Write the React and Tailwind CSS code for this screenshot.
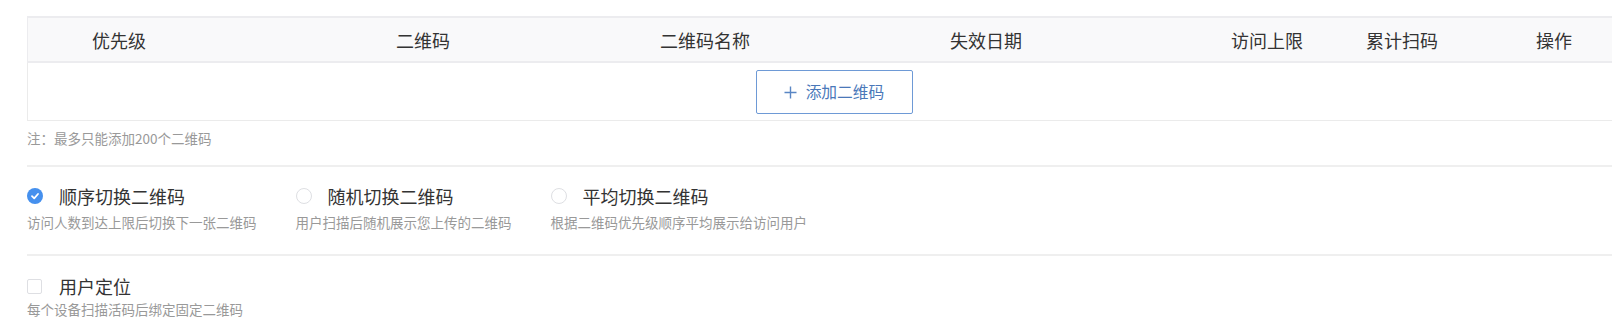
import React from "react";

const font = { fontFamily: '"Noto Sans CJK SC", "Noto Sans", sans-serif' };

function Radio({ checked }) {
  if (checked) {
    return (
      <span className="flex h-[16px] w-[16px] shrink-0 items-center justify-center rounded-full bg-[#4590ee]">
        <svg width="10" height="10" viewBox="0 0 10 10">
          <path d="M2 5.2 L4.2 7.3 L8 3" fill="none" stroke="#fff" strokeWidth="1.8" strokeLinecap="round" strokeLinejoin="round" />
        </svg>
      </span>
    );
  }
  return <span className="h-[16px] w-[16px] shrink-0 rounded-full border border-[#dedfe3] bg-white" />;
}

function Option({ checked, label, desc }) {
  return (
    <div>
      <div className="flex h-[24px] items-center">
        <Radio checked={checked} />
        <span className="ml-[16px] text-[18px] leading-[24px] text-[#333]">{label}</span>
      </div>
      <div className="mt-[5px] text-[13.5px] leading-[18px] text-[#999]">{desc}</div>
    </div>
  );
}

export default function App() {
  const heads = [
    ["优先级", "w-[304px]"],
    ["二维码", "w-[264px]"],
    ["二维码名称", "w-[290px]"],
    ["失效日期", "w-[281px]"],
    ["访问上限", "w-[135px]"],
    ["累计扫码", "w-[170px]"],
    ["操作", "w-[100px]"],
  ];
  return (
    <div style={font} className="h-[336px] w-[1612px] overflow-hidden bg-white pl-[27px] pt-[16px]">
      <div className="w-[1613px]">
        <div className="flex h-[47px] items-center border-t-2 border-b-2 border-l border-[#ececef] bg-[#f9f9fa] pl-[64px]">
          {heads.map(([t, w]) => (
            <div key={t} className={`${w} shrink-0 text-[18px] leading-[24px] text-[#333]`}>
              {t}
            </div>
          ))}
        </div>
        <div className="flex h-[58px] items-start justify-center border-b border-l border-[#ebebeb] pt-[7px]">
          <button className="flex h-[44px] w-[157px] items-center justify-center rounded-[2px] border border-[#6e9ad6] bg-white text-[15.75px] leading-[20px] text-[#4a78b9]">
            <svg width="13" height="13" viewBox="0 0 13 13" className="mr-[9px]">
              <path d="M6.5 0.5 V12.5 M0.5 6.5 H12.5" stroke="#5a86c4" strokeWidth="1.4" fill="none" />
            </svg>
            添加二维码
          </button>
        </div>
      </div>
      <div className="mt-[8px] text-[13.5px] leading-[18px] text-[#999]">注：最多只能添加200个二维码</div>
      <div className="mt-[18px] h-[2px] w-[1600px] bg-[#efefef]" />
      <div className="mt-[17px] flex gap-[39px]">
        <Option checked label="顺序切换二维码" desc="访问人数到达上限后切换下一张二维码" />
        <Option label="随机切换二维码" desc="用户扫描后随机展示您上传的二维码" />
        <Option label="平均切换二维码" desc="根据二维码优先级顺序平均展示给访问用户" />
      </div>
      <div className="mt-[23px] h-[2px] w-[1600px] bg-[#efefef]" />
      <div className="mt-[18px]">
        <div className="flex h-[24px] items-center">
          <span className="h-[15px] w-[15px] shrink-0 rounded-[2px] border border-[#dedfe3] bg-white" />
          <span className="ml-[17px] text-[18px] leading-[24px] text-[#333]">用户定位</span>
        </div>
        <div className="mt-[2px] text-[13.5px] leading-[18px] text-[#999]">每个设备扫描活码后绑定固定二维码</div>
      </div>
    </div>
  );
}
